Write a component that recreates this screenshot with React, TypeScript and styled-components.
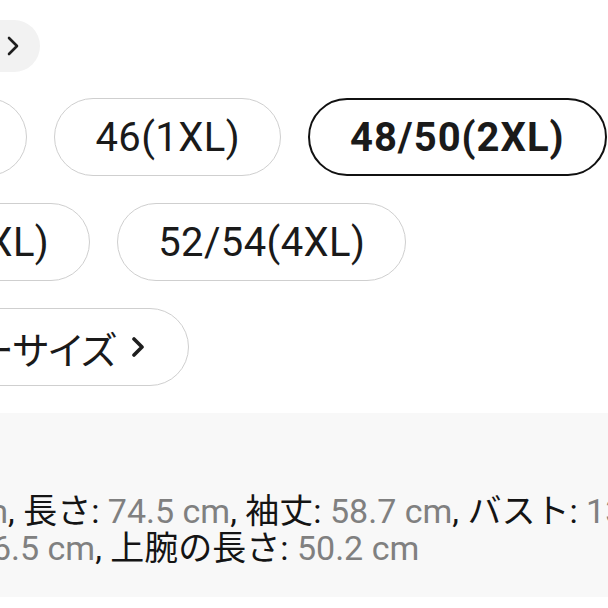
import styled, { createGlobalStyle } from 'styled-components'

const GlobalStyle = createGlobalStyle`
  html, body {
    margin: 0;
    padding: 0;
    background: #fff;
  }
  body {
    font-family: Roboto, "Noto Sans CJK JP", sans-serif;
    color: #1a1a1a;
    overflow: hidden;
  }
`

const Screen = styled.div`
  width: 608px;
  height: 608px;
  overflow: hidden;
  display: flex;
  flex-direction: column;
  background: #fff;
`

// the sheet starts left of the visible area (the screenshot is a zoomed crop)
const Sheet = styled.div`
  margin-left: -199px;
  width: 1000px;
  padding-top: 20px;
  display: flex;
  flex-direction: column;
`

const GuideLink = styled.a`
  align-self: flex-start;
  display: inline-flex;
  align-items: center;
  gap: 8px;
  height: 52px;
  padding: 0 21px 0 31px;
  border-radius: 26px;
  background: #f2f2f2;
  font-size: 28px;
  color: #222;
  text-decoration: none;
`

const SizeGrid = styled.div`
  display: flex;
  flex-wrap: wrap;
  gap: 27px;
  width: 820px;
  margin-top: 26px;
`

const SizeChip = styled.button<{ $selected?: boolean; $jp?: boolean }>`
  box-sizing: border-box;
  display: inline-flex;
  align-items: center;
  gap: 16px;
  height: 78px;
  padding: ${(p) => (p.$jp ? '0 44px 0 40px' : '0 40px')};
  border-radius: 39px;
  background: #fff;
  border: ${(p) => (p.$selected ? '2.5px solid #111' : '1.5px solid #cfcfcf')};
  font-family: Roboto, "Noto Sans CJK JP", sans-serif;
  font-size: ${(p) => (p.$jp ? '38px' : '40px')};
  font-weight: ${(p) => (p.$selected ? 700 : 400)};
  letter-spacing: ${(p) => (p.$selected ? '1px' : p.$jp ? '0' : '0.4px')};
  font-feature-settings: ${(p) => (p.$jp ? '"palt"' : 'normal')};
  color: #1a1a1a;
  white-space: nowrap;
  cursor: pointer;
`

const Band = styled.section`
  box-sizing: border-box;
  margin-top: 27px;
  height: 184px;
  padding-top: 80px;
  background: #f8f8f8;
`

const Measurements = styled.p`
  margin: 0;
  font-size: 34px;
  line-height: 37px;
  white-space: nowrap;
  color: #141414;
`

const Value = styled.span`
  color: #808080;
`

const BottomBar = styled.div`
  margin-top: 11px;
  height: 40px;
  border-top: 2px solid #4a4a4a;
`

const Chevron = ({ stroke = 2.6 }: { stroke?: number }) => (
  <svg width={12} height={20} viewBox="0 0 12 20" fill="none">
    <path d="M2 2 L10 10 L2 18" stroke="#1e1e1e" strokeWidth={stroke} strokeLinecap="round" strokeLinejoin="round" />
  </svg>
)

const sizes = ['44(0XL)', '46(1XL)', '48/50(2XL)', '50/52(3XL)', '52/54(4XL)']

const line1 = [
  ['肩幅', '52.5 cm'],
  ['長さ', '74.5 cm'],
  ['袖丈', '58.7 cm'],
  ['バスト', '132 cm'],
]
const line2 = [
  ['ウエスト', '126.5 cm'],
  ['上腕の長さ', '50.2 cm'],
]

const renderLine = (items: string[][]) =>
  items.map(([label, value], i) => (
    <span key={label}>
      {label}: <Value>{value}</Value>
      {i < items.length - 1 ? ', ' : ''}
    </span>
  ))

export default function App() {
  return (
    <Screen>
      <GlobalStyle />
      <Sheet>
        <GuideLink href="#">
          サイズガイド
          <Chevron />
        </GuideLink>
        <SizeGrid>
          {sizes.map((s) => (
            <SizeChip key={s} $selected={s === '48/50(2XL)'}>
              {s}
            </SizeChip>
          ))}
          <SizeChip $jp>
            レギュラーサイズ
            <Chevron stroke={3.6} />
          </SizeChip>
        </SizeGrid>
        <Band>
          <Measurements>
            {renderLine(line1)}
            <br />
            {renderLine(line2)}
          </Measurements>
        </Band>
        <BottomBar />
      </Sheet>
    </Screen>
  )
}
